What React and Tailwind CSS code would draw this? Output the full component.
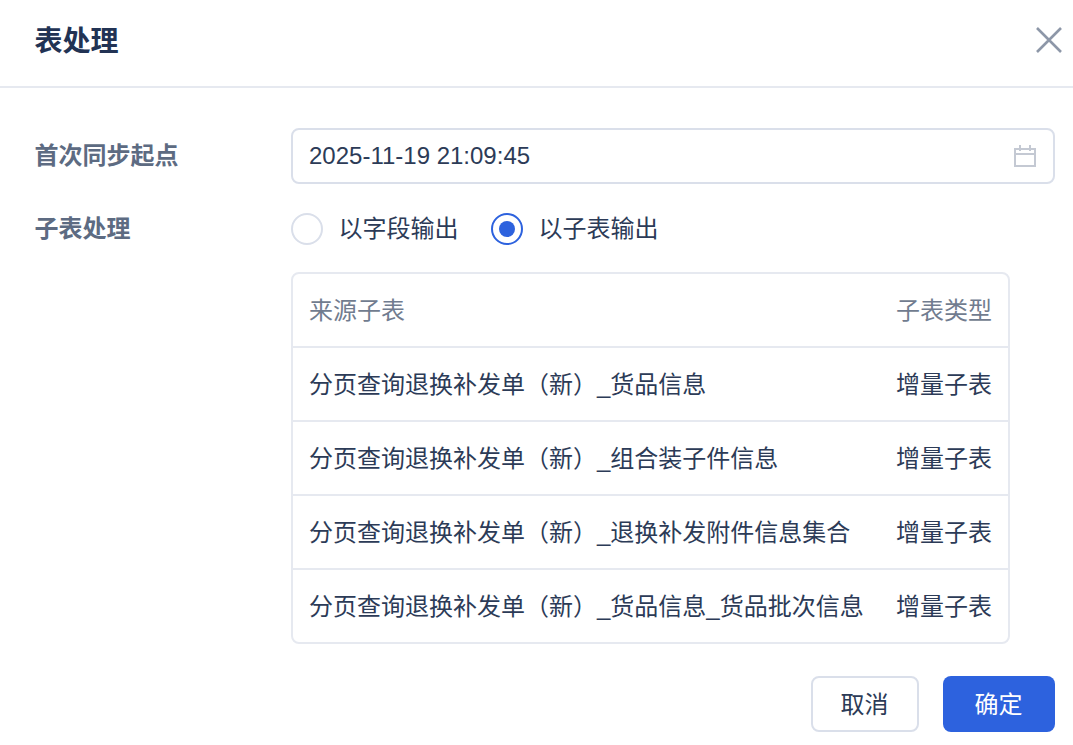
import React from "react";

const rows = [
  "分页查询退换补发单（新）_货品信息",
  "分页查询退换补发单（新）_组合装子件信息",
  "分页查询退换补发单（新）_退换补发附件信息集合",
  "分页查询退换补发单（新）_货品信息_货品批次信息",
];

const App = () => {
  return (
    <div className="w-[1073px] h-[745px] overflow-hidden bg-white font-['Liberation_Sans','Noto_Sans_CJK_SC',sans-serif] text-[#2c3b57]">
      <div className="flex h-[88px] items-center justify-between border-b-2 border-[#e6e9f0] pb-[6px] pl-[34.5px] pr-[10px]">
        <h1 className="mt-1 text-[28px] font-bold text-[#223354]">表处理</h1>
        <svg width="28" height="28" viewBox="0 0 28 28" fill="none" stroke="#8d97a8" strokeWidth="2.6">
          <path d="M2 2 L26 26 M26 2 L2 26" />
        </svg>
      </div>

      <div className="pl-[34.5px] pr-[18px] pt-10">
        <div className="flex items-center">
          <div className="w-[256.5px] text-2xl font-bold text-[#5d6b82]">首次同步起点</div>
          <div className="flex h-14 flex-1 items-center justify-between rounded-lg border-2 border-[#dadfea] pl-4 pr-[17px] text-2xl">
            <span>2025-11-19 21:09:45</span>
            <svg width="22" height="22" viewBox="0 0 22 22" fill="none" stroke="#c4c9d3" strokeWidth="2">
              <path d="M1 4 H21 V21 H1 Z M1 9 H21 M6 0 V6 M16 0 V6" />
            </svg>
          </div>
        </div>

        <div className="mt-[29px] flex h-8 items-center">
          <div className="w-[256.5px] text-2xl font-bold text-[#5d6b82]">子表处理</div>
          <div className="flex items-center">
            <span className="h-8 w-8 rounded-full border-2 border-[#dadfea]" />
            <span className="ml-[15.5px] text-2xl">以字段输出</span>
            <span className="ml-[32.5px] flex h-8 w-8 items-center justify-center rounded-full border-2 border-[#2d62de]">
              <span className="h-4 w-4 rounded-full bg-[#2d62de]" />
            </span>
            <span className="ml-[15.5px] text-2xl">以子表输出</span>
          </div>
        </div>

        <div className="ml-[256.5px] mt-[27px] w-[719px] rounded-lg border-2 border-[#e6e9f0] text-2xl">
          <div className="flex h-[72px] items-center justify-between pl-4 pr-4 pt-[2px] text-[#717c8f]">
            <span>来源子表</span>
            <span>子表类型</span>
          </div>
          {rows.map((row) => (
            <div key={row} className="flex h-[74px] items-center justify-between border-t-2 border-[#e6e9f0] pl-4 pr-4 pt-[2px]">
              <span>{row}</span>
              <span>增量子表</span>
            </div>
          ))}
        </div>

        <div className="mt-8 flex justify-end gap-6 text-2xl">
          <button type="button" className="h-14 w-[108px] rounded-lg border-2 border-[#dadfea] bg-white pr-[1px] pt-[2px]">取消</button>
          <button type="button" className="h-14 w-[112px] rounded-lg bg-[#2d62de] pr-[1px] pt-[2px] text-white">确定</button>
        </div>
      </div>
    </div>
  );
};

export default App;
